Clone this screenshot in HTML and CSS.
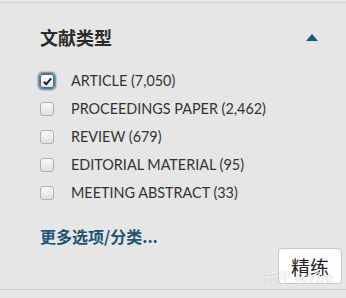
FILE: index.html
```html
<!DOCTYPE html>
<html lang="zh">
<head>
<meta charset="utf-8">
<link rel="stylesheet" href="styles.css">
</head>
<body>
<div class="panel">
  <div class="head">
    <h2 class="title">文献类型</h2>
    <span class="caret"></span>
  </div>
  <ul class="list">
    <li class="row"><span class="box checked"><svg viewBox="0 0 12 12" width="11" height="11"><path d="M2 6.3 L4.6 9 L10 2.6" fill="none" stroke="#222" stroke-width="2.2"/></svg></span><span class="label">ARTICLE (7,050)</span></li>
    <li class="row"><span class="box"></span><span class="label">PROCEEDINGS PAPER (2,462)</span></li>
    <li class="row"><span class="box"></span><span class="label">REVIEW (679)</span></li>
    <li class="row"><span class="box"></span><span class="label">EDITORIAL MATERIAL (95)</span></li>
    <li class="row"><span class="box"></span><span class="label">MEETING ABSTRACT (33)</span></li>
  </ul>
  <a class="more">更多选项/分类...</a>
  <div class="actions">
    <button class="refine">精练</button>
    <span class="watermark">知乎 @Fire</span>
  </div>
</div>
<div class="foot"></div>
</body>
</html>
```
FILE: styles.css
```css
html, body {
  margin: 0;
  padding: 0;
  background: #e6e6e6;
}
body {
  width: 346px;
  height: 298px;
  overflow: hidden;
  font-family: "Lato", "Noto Sans CJK SC", sans-serif;
  color: #333;
}
.panel {
  margin-top: 2px;
  border-top: 1px solid #d2d2d2;
  border-bottom: 1px solid #cfcfcf;
  padding: 0 4px 3px 40px;
  height: 288px;
  box-sizing: border-box;
  display: flex;
  flex-direction: column;
}
.head {
  display: flex;
  justify-content: space-between;
  align-items: center;
  margin-top: 22px;
  padding-right: 24px;
  height: 24px;
}
.title {
  margin: 0;
  font-size: 18px;
  font-weight: 700;
  line-height: 24px;
  font-family: "Noto Sans CJK SC", sans-serif;
  color: #2b2b2b;
}
.caret {
  width: 0;
  height: 0;
  border-left: 6.5px solid transparent;
  border-right: 6.5px solid transparent;
  border-bottom: 7px solid #1b5a7a;
  margin-top: 1px;
}
.list {
  list-style: none;
  margin: 18px 0 0 0;
  padding: 0;
}
.row {
  display: flex;
  align-items: center;
  height: 28px;
}
.box {
  width: 14px;
  height: 14px;
  box-sizing: border-box;
  border: 1px solid #aeaeae;
  border-radius: 3px;
  background: linear-gradient(#fafafa, #e0e0e0);
  display: flex;
  align-items: center;
  justify-content: center;
  margin-right: 17px;
}
.box.checked {
  border-color: #3c6f8c;
  background: linear-gradient(#ffffff, #e8e8e8);
  box-shadow: 0 0 2px 2px rgba(27, 90, 122, 0.75);
}
.label {
  font-size: 14.4px;
  line-height: 18px;
  color: #333;
}
.more {
  margin-top: 19px;
  font-family: "Noto Sans CJK SC", sans-serif;
  font-weight: 700;
  font-size: 16px;
  line-height: 20px;
  color: #1b5474;
}
.actions {
  display: flex;
  justify-content: flex-end;
  margin-top: 2px;
  position: relative;
}
.refine {
  width: 64px;
  height: 36px;
  background: #fff;
  border: 1px solid #c8c8c8;
  border-radius: 4px;
  font-family: "Noto Sans CJK SC", sans-serif;
  font-size: 19px;
  color: #222;
  padding: 0;
}
.watermark {
  position: absolute;
  right: 9px;
  top: 21px;
  font-family: "Noto Sans CJK SC", sans-serif;
  font-size: 14px;
  line-height: 16px;
  color: rgba(255, 255, 255, 0.85);
  text-shadow: 0 0 1px rgba(0, 0, 0, 0.25);
  pointer-events: none;
}
.foot {
  height: 8px;
}
```
